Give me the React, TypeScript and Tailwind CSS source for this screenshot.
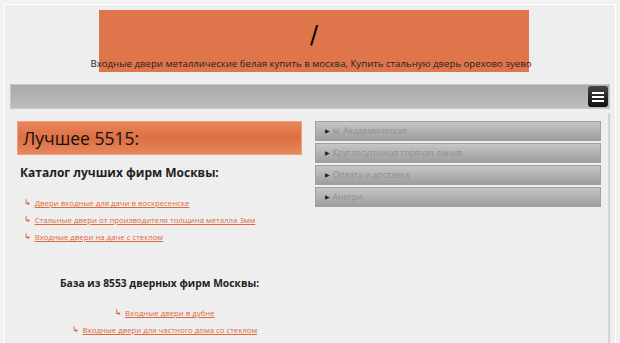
import React from "react";

const leftLinks = [
  "Двери входные для дачи в воскресенске",
  "Стальные двери от производителя толщина металла 3мм",
  "Входные двери на даче с стеклом",
];
const bottomLinks = [
  "Входные двери в дубне",
  "Входные двери для частного дома со стеклом",
];
const acc = [
  "м. Академическая",
  "Круглосуточная горячая линия.",
  "Оплата и доставка",
  "Анегри",
];

function LinkRow({ t }: { t: string }) {
  return (
    <div className="flex items-center h-[14px] text-[7.8px] leading-[14px]">
      <span className="text-[#e0693a] text-[8px] font-bold mr-[4px]" style={{ fontFamily: '"DejaVu Sans", sans-serif' }}>↳</span>
      <span className="text-[#e0693a] underline">{t}</span>
    </div>
  );
}

export default function App() {
  return (
    <div className="min-h-screen bg-[#f2f2f2] pt-[4px] px-[4px] overflow-hidden" style={{ fontFamily: '"Open Sans", "DejaVu Sans", sans-serif' }}>
      <div className="border border-white bg-[#eeeeee] h-[340px] px-[5px] pt-[5px]">
        {/* header */}
        <div className="ml-[89px] w-[430px] h-[62px] bg-[#df754b] pt-[13px] text-center">
          <div className="text-[24px] leading-[24px] text-black" style={{ fontFamily: '"DejaVu Sans", sans-serif' }}>/</div>
          <div className="mt-[10px] -mx-[30px] text-[9.65px] leading-[14px] whitespace-nowrap text-[#222] -translate-x-[3px]">
            Входные двери металлические белая купить в москва, Купить стальную дверь орехово зуево
          </div>
        </div>
        {/* nav */}
        <div className="mt-[12px] h-[25px] border border-[#c8c8c8] bg-gradient-to-b from-[#a9a9a9] to-[#bdbdbd] flex items-center justify-end pr-[1px]">
          <div className="w-[20px] h-[21px] rounded-[3px] bg-gradient-to-b from-[#444] to-[#111] flex flex-col items-center justify-center gap-[2px]">
            <div className="w-[12px] h-[2px] bg-white" />
            <div className="w-[12px] h-[2px] bg-white" />
            <div className="w-[12px] h-[2px] bg-white" />
          </div>
        </div>
        {/* content */}
        <div className="flex border-r-2 border-[#d4d4d4] mt-[4px] h-[240px]">
          <div className="w-[300px] pt-[8px] pl-[7px]">
            <div className="w-[285px] h-[34px] border border-[#f0a07c] bg-gradient-to-b from-[#e8875c] via-[#dd6f42] to-[#e8875c] flex items-center pl-[5px] text-[17.5px] text-[#111]">
              Лучшее 5515:
            </div>
            <div className="mt-[10px] ml-[3px] font-bold text-[12px] leading-[16px] text-[#222]">
              Каталог лучших фирм Москвы:
            </div>
            <div className="mt-[15px] ml-[7px] flex flex-col gap-[3px]">
              {leftLinks.map((t) => (
                <LinkRow key={t} t={t} />
              ))}
            </div>
            <div className="mt-[32px] pr-[8px] text-center font-bold text-[10.3px] leading-[14px] text-[#222]">
              База из 8553 дверных фирм Москвы:
            </div>
            <div className="mt-[16px] flex flex-col items-center gap-[3px] pl-[2px]">
              {bottomLinks.map((t) => (
                <LinkRow key={t} t={t} />
              ))}
            </div>
          </div>
          <div className="flex-1 pt-[8px] pl-[5px] pr-[7px]">
            <div className="flex flex-col gap-[2px]">
              {acc.map((t) => (
                <div key={t} className="h-[20px] border border-[#a0a0a0] bg-gradient-to-b from-[#c6c6c6] via-[#b2b2b2] to-[#9e9e9e] flex items-center pl-[9px] text-[8.5px] text-[#909090]">
                  <span className="text-[#222] text-[6px] mr-[3px]">▶</span>
                  {t}
                </div>
              ))}
            </div>
          </div>
        </div>
      </div>
    </div>
  );
}
